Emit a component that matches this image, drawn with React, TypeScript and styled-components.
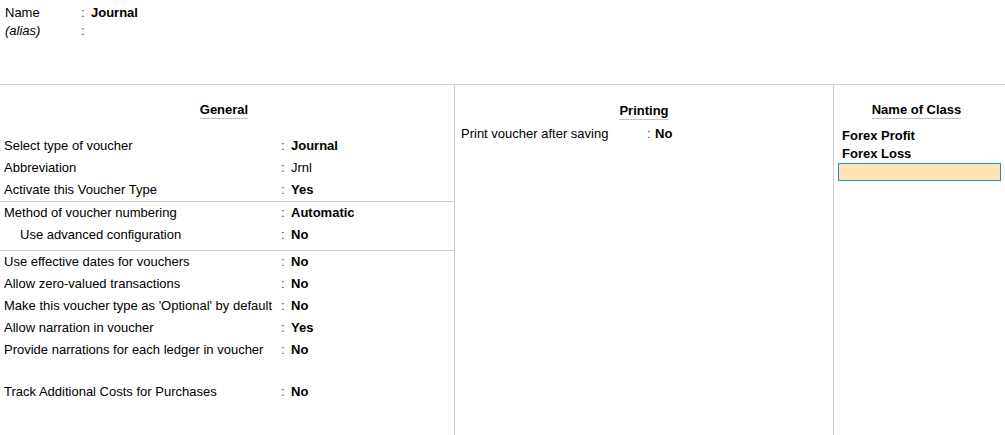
import React from "react";
import styled, { createGlobalStyle } from "styled-components";

const Global = createGlobalStyle`
  html, body { margin: 0; padding: 0; background: #fff; }
  body { font-family: "Liberation Sans", Arial, sans-serif; font-size: 13px; color: #000; }
`;

const Page = styled.div`
  width: 1005px;
  height: 435px;
  display: flex;
  flex-direction: column;
  overflow: hidden;
`;

const Top = styled.div`
  height: 85px;
  box-sizing: border-box;
  padding: 4px 0 0 5px;
  border-bottom: 1px solid #cfcfcf;
`;

const TopRow = styled.div`
  display: grid;
  grid-template-columns: 76px 10px auto;
  height: 18px;
  line-height: 18px;
`;

const TopLabel = styled.span<{ $italic?: boolean }>`
  font-style: ${(p) => (p.$italic ? "italic" : "normal")};
`;

const Colon = styled.span`
  color: #444;
`;

const Value = styled.span<{ $bold?: boolean }>`
  font-weight: ${(p) => (p.$bold ? "bold" : "normal")};
`;

const Columns = styled.div`
  flex: 1;
  display: grid;
  grid-template-columns: 454px 1px 378px 1px 1fr;
`;

const Divider = styled.div`
  background: #cfcfcf;
`;

const Column = styled.div<{ $top: number }>`
  display: flex;
  flex-direction: column;
  padding-top: ${(p) => p.$top}px;
  min-width: 0;
`;

const HeaderWrap = styled.div`
  display: flex;
  justify-content: center;
  padding-right: 6px;
`;

const Header = styled.div`
  font-weight: bold;
  font-size: 13px;
  line-height: 15px;
  padding-bottom: 1px;
  border-bottom: 1px solid #c4c4c4;
`;

const Group = styled.div<{ $line?: boolean; $pad?: number }>`
  display: flex;
  flex-direction: column;
  padding-left: 4px;
  padding-bottom: ${(p) => p.$pad ?? 0}px;
  border-bottom: ${(p) => (p.$line ? "1px solid #cfcfcf" : "none")};
`;

const Row = styled.div<{ $labelW: number; $colonW?: number; $indent?: number }>`
  display: grid;
  grid-template-columns: ${(p) => p.$labelW}px ${(p) => p.$colonW ?? 10}px auto;
  height: 22px;
  line-height: 22px;
  white-space: nowrap;
  & > :first-child {
    padding-left: ${(p) => p.$indent ?? 0}px;
  }
`;

const Spacer = styled.div<{ $h: number }>`
  height: ${(p) => p.$h}px;
`;

const ClassItem = styled.div`
  font-weight: bold;
  height: 18px;
  line-height: 18px;
  padding-left: 8px;
`;

const ClassInput = styled.div`
  margin: 0 4px;
  height: 18px;
  box-sizing: border-box;
  background: #fde6b4;
  border: 1px solid #1f8ad0;
`;

type R = { label: string; value: string; bold?: boolean; indent?: number };

const group1: R[] = [
  { label: "Select type of voucher", value: "Journal", bold: true },
  { label: "Abbreviation", value: "Jrnl" },
  { label: "Activate this Voucher Type", value: "Yes", bold: true },
];
const group2: R[] = [
  { label: "Method of voucher numbering", value: "Automatic", bold: true },
  { label: "Use advanced configuration", value: "No", bold: true, indent: 16 },
];
const group3: R[] = [
  { label: "Use effective dates for vouchers", value: "No", bold: true },
  { label: "Allow zero-valued transactions", value: "No", bold: true },
  { label: "Make this voucher type as 'Optional' by default", value: "No", bold: true },
  { label: "Allow narration in voucher", value: "Yes", bold: true },
  { label: "Provide narrations for each ledger in voucher", value: "No", bold: true },
];

const GenRows = ({ rows }: { rows: R[] }) => (
  <>
    {rows.map((r) => (
      <Row key={r.label} $labelW={277} $indent={r.indent}>
        <span>{r.label}</span>
        <Colon>:</Colon>
        <Value $bold={r.bold}>{r.value}</Value>
      </Row>
    ))}
  </>
);

const GeneralBody = styled.div`
  margin-top: 16px;
  display: flex;
  flex-direction: column;
`;

const PrintingCol = styled(Column)`
  padding-left: 6px;
`;

const PrintRow = styled(Row)`
  margin-top: 3px;
`;

const ClassList = styled.div`
  margin-top: 8px;
  display: flex;
  flex-direction: column;
`;

export default function App() {
  return (
    <Page>
      <Global />
      <Top>
        <TopRow>
          <TopLabel>Name</TopLabel>
          <Colon>:</Colon>
          <Value $bold>Journal</Value>
        </TopRow>
        <TopRow>
          <TopLabel $italic>(alias)</TopLabel>
          <Colon>:</Colon>
          <Value />
        </TopRow>
      </Top>
      <Columns>
        <Column $top={17}>
          <HeaderWrap>
            <Header>General</Header>
          </HeaderWrap>
          <GeneralBody>
            <Group $line>
              <GenRows rows={group1} />
            </Group>
            <Group $line $pad={4}>
              <GenRows rows={group2} />
            </Group>
            <Group>
              <GenRows rows={group3} />
              <Spacer $h={20} />
              <GenRows rows={[{ label: "Track Additional Costs for Purchases", value: "No", bold: true }]} />
            </Group>
          </GeneralBody>
        </Column>
        <Divider />
        <PrintingCol $top={18}>
          <HeaderWrap>
            <Header>Printing</Header>
          </HeaderWrap>
          <PrintRow $labelW={186} $colonW={8}>
            <span>Print voucher after saving</span>
            <Colon>:</Colon>
            <Value $bold>No</Value>
          </PrintRow>
        </PrintingCol>
        <Divider />
        <Column $top={17}>
          <HeaderWrap>
            <Header>Name of Class</Header>
          </HeaderWrap>
          <ClassList>
            <ClassItem>Forex Profit</ClassItem>
            <ClassItem>Forex Loss</ClassItem>
            <ClassInput />
          </ClassList>
        </Column>
      </Columns>
    </Page>
  );
}
